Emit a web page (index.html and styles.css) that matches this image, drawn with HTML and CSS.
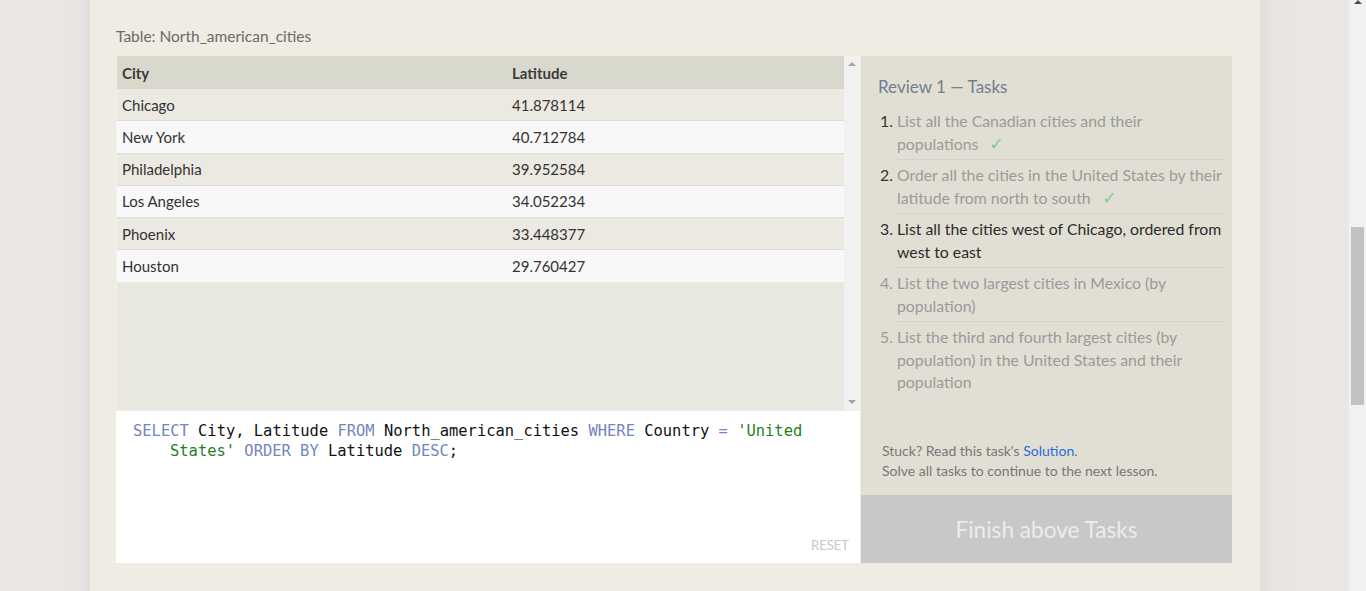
FILE: index.html
```html
<!DOCTYPE html>
<html>
<head>
<meta charset="utf-8">
<link rel="stylesheet" href="styles.css">
</head>
<body>
<div class="gutter gutter-left"></div>
<div class="card">
  <div class="table-title">Table: North_american_cities</div>
  <div class="exercise">
    <div class="left">
      <div class="table-area">
        <div class="table-scroll">
          <table class="results">
            <thead>
              <tr><th class="c1">City</th><th>Latitude</th></tr>
            </thead>
            <tbody>
              <tr><td>Chicago</td><td>41.878114</td></tr>
              <tr><td>New York</td><td>40.712784</td></tr>
              <tr><td>Philadelphia</td><td>39.952584</td></tr>
              <tr><td>Los Angeles</td><td>34.052234</td></tr>
              <tr><td>Phoenix</td><td>33.448377</td></tr>
              <tr><td>Houston</td><td>29.760427</td></tr>
            </tbody>
          </table>
        </div>
        <div class="mini-scroll">
          <span class="arrow up"></span>
          <span class="arrow down"></span>
        </div>
      </div>
      <div class="editor">
        <div class="code">
          <div class="line"><span class="kw">SELECT</span> City, Latitude <span class="kw">FROM</span> North_american_cities <span class="kw">WHERE</span> Country <span class="kw">=</span> <span class="str">'United</span></div>
          <div class="line indent"><span class="str">States'</span> <span class="kw">ORDER BY</span> Latitude <span class="kw">DESC</span>;</div>
        </div>
        <div class="reset">RESET</div>
      </div>
    </div>
    <div class="right">
      <div class="tasks">
        <h3 class="tasks-title">Review 1 — Tasks</h3>
        <ol class="task-list">
          <li class="done"><span class="num">1.</span><span class="txt">List all the Canadian cities and their<br>populations <span class="check">✓</span></span></li>
          <li class="done"><span class="num">2.</span><span class="txt">Order all the cities in the United States by their<br>latitude from north to south <span class="check">✓</span></span></li>
          <li class="current"><span class="num">3.</span><span class="txt">List all the cities west of Chicago, ordered from<br>west to east</span></li>
          <li class="todo"><span class="num">4.</span><span class="txt">List the two largest cities in Mexico (by<br>population)</span></li>
          <li class="todo last"><span class="num">5.</span><span class="txt">List the third and fourth largest cities (by<br>population) in the United States and their<br>population</span></li>
        </ol>
        <div class="hint">
          <div>Stuck? Read this task's <a class="solution">Solution</a>.</div>
          <div>Solve all tasks to continue to the next lesson.</div>
        </div>
      </div>
      <div class="finish">Finish above Tasks</div>
    </div>
  </div>
</div>
<div class="gutter gutter-right"></div>
<div class="page-scroll">
  <span class="arrow up dark"></span>
  <div class="thumb"></div>
</div>
</body>
</html>
```

FILE: styles.css
```css
html, body {
  margin: 0;
  padding: 0;
  height: 591px;
  overflow: hidden;
}
body {
  display: flex;
  font-family: Lato, "Open Sans", sans-serif;
  background: #ebe6e3;
}
.gutter {
  width: 90px;
  flex: none;
}
.gutter-left {
  background: linear-gradient(to left, #e0dcd9 0px, #e8e4e1 12px, #ebe7e4 30px);
}
.gutter-right {
  width: 89px;
  background: linear-gradient(to right, #e1dddb 0px, #e8e4e1 12px, #ebe6e3 30px);
}
.card {
  width: 1170px;
  flex: none;
  background: #efece4;
  padding: 26px 26px 0 26px;
  box-sizing: border-box;
}
.table-title {
  font-size: 15.5px;
  line-height: 20px;
  color: #6a6a6a;
  margin-bottom: 10px;
}
.exercise {
  display: flex;
  gap: 1px;
  align-items: stretch;
}
.left {
  width: 744px;
  flex: none;
  display: flex;
  flex-direction: column;
  gap: 1px;
}
.table-area {
  height: 354px;
  display: flex;
  background: #e9e8e0;
  border-left: 1px solid #f3f1ec;
}
.table-scroll {
  flex: 1;
}
.results {
  width: 100%;
  border-collapse: collapse;
  font-size: 15px;
  color: #333;
}
.results th {
  background: #d9d8cc;
  text-align: left;
  font-weight: 700;
  height: 33px;
  padding: 0 5px;
  color: #3a3a3a;
}
.results th.c1 {
  width: 380px;
}
.results td {
  height: 31.25px;
  padding: 0 5px;
  border-top: 1px solid #dddddd;
}
.results tbody tr:nth-child(odd) td {
  background: #ebe9e1;
}
.results tbody tr:nth-child(even) td {
  background: #f8f8f8;
}
.results tbody tr:first-child td {
  border-top: none;
}
.mini-scroll {
  width: 16px;
  flex: none;
  background: #f1f1f1;
  display: flex;
  flex-direction: column;
  justify-content: space-between;
  align-items: center;
  padding: 6px 0 6px 0;
  box-sizing: border-box;
}
.arrow {
  width: 0;
  height: 0;
  border-left: 4px solid transparent;
  border-right: 4px solid transparent;
}
.arrow.up {
  border-bottom: 4px solid #a3a3a3;
}
.arrow.down {
  border-top: 4px solid #a3a3a3;
}
.arrow.dark {
  border-bottom-color: #505050;
}
.editor {
  height: 152px;
  background: #ffffff;
  padding: 10px 16px 0 17px;
  box-sizing: border-box;
  display: flex;
  flex-direction: column;
  justify-content: space-between;
}
.code {
  font-family: "DejaVu Sans Mono", "Liberation Mono", monospace;
  font-size: 15.45px;
  line-height: 20px;
  color: #111;
}
.code .line {
  white-space: nowrap;
}
.code .indent {
  padding-left: 37px;
}
.kw {
  color: #7585bd;
}
.str {
  color: #1f7f1f;
}
.reset {
  align-self: flex-end;
  font-size: 13px;
  line-height: 16px;
  color: #c8c8c8;
  margin: 0 -5px 10px 0;
}
.right {
  width: 371px;
  flex: none;
  display: flex;
  flex-direction: column;
}
.tasks {
  background: #e1dfd4;
  flex: 1;
  padding: 20px 8px 0 17px;
  display: flex;
  flex-direction: column;
}
.tasks-title {
  margin: 0 0 8px 0;
  font-weight: 400;
  font-size: 17px;
  line-height: 22px;
  color: #737e8b;
}
.task-list {
  list-style: none;
  margin: 0;
  padding: 0;
  font-size: 15.8px;
  line-height: 22.5px;
}
.task-list li {
  display: flex;
  color: #9a9a9a;
}
.task-list .num {
  width: 19px;
  box-sizing: border-box;
  flex: none;
  text-align: right;
  padding-right: 4px;
  padding-top: 4px;
}
.task-list .txt {
  flex: 1;
  padding: 4px 0;
  border-bottom: 1px solid #d5d3c8;
  white-space: nowrap;
}
.task-list li.last .txt {
  border-bottom: none;
}
.task-list li.done .num {
  color: #333;
}
.task-list li.current {
  color: #2b2b2b;
}
.check {
  color: #8bcc8b;
  font-size: 18px;
  line-height: 10px;
  margin-left: 7px;
}
.hint {
  margin-top: auto;
  margin-left: 4px;
  padding-bottom: 14px;
  font-size: 14px;
  line-height: 20px;
  color: #777;
}
.solution {
  color: #2a6ae0;
  cursor: pointer;
}
.finish {
  height: 68px;
  background: #c8c8c8;
  color: #ececec;
  font-size: 22.6px;
  display: flex;
  align-items: center;
  justify-content: center;
}
.page-scroll {
  width: 17px;
  flex: none;
  background: #f1f1f1;
  display: flex;
  flex-direction: column;
  align-items: center;
}
.thumb {
  margin-top: 223px;
  width: 13px;
  height: 178px;
  background: #c1c1c1;
}
```
